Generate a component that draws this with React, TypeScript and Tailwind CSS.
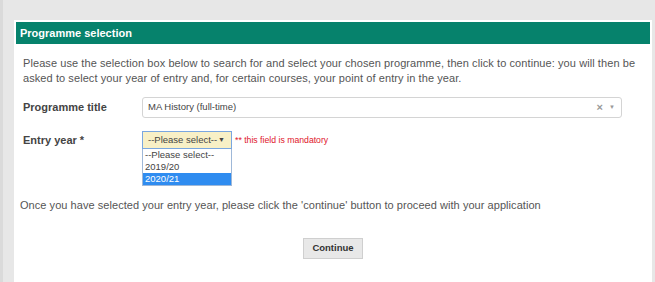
import React from 'react';

const font = { fontFamily: '"Liberation Sans", Arial, sans-serif' };

const EntryYearSelect: React.FC = () => {
  const options = ['--Please select--', '2019/20', '2020/21'];
  return (
    <div className="relative w-[90px]">
      <div className="h-[18px] border border-[#7aa7e0] bg-[#f8f0c6] flex items-center justify-between pl-[5px] pr-[6px] text-[9.5px] text-[#444] whitespace-nowrap">
        <span>--Please select--</span>
        <span className="text-[7px] text-[#444]">▼</span>
      </div>
      <ul className="absolute left-0 top-[18px] w-[90px] border border-[#9fb8d8] border-t-0 bg-white text-[9.5px] leading-[12px] text-[#444] whitespace-nowrap">
        {options.map((o, i) => (
          <li
            key={o}
            className={i === 2 ? 'bg-[#2f8cf0] text-white px-[2px]' : 'px-[2px]'}
          >
            {o}
          </li>
        ))}
      </ul>
    </div>
  );
};

export default function App() {
  return (
    <div
      className="h-[282px] w-full overflow-hidden bg-[#e7e7e7] border-l-[3px] border-[#dadada] pt-5 pl-[11px] pr-[3px]"
      style={font}
    >
      <div className="h-full bg-white p-[2px]">
        <div className="h-[22px] bg-[#06826c] text-white font-bold text-[11px] flex items-center pl-1">
          Programme selection
        </div>

        <div className="px-[7px] text-[#555]">
          <p className="mt-[12px] text-[11px] leading-[15px] tracking-[0.08px]">
            Please use the selection box below to search for and select your chosen programme, then click to continue: you will then be asked to select your year of entry and, for certain courses, your point of entry in the year.
          </p>

          <div className="mt-[11px] flex items-center">
            <label className="w-[119px] font-bold text-[11px] text-[#444]">Programme title</label>
            <div className="h-[21px] w-[480px] border border-[#d4d4d4] rounded-[3px] flex items-center justify-between pl-[5px] pr-[6px] text-[9.5px] text-[#444]">
              <span>MA History (full-time)</span>
              <span className="flex items-center gap-[6px] text-[#999]">
                <span className="text-[11px] font-bold leading-none">×</span>
                <span className="text-[6px]">▼</span>
              </span>
            </div>
          </div>

          <div className="mt-[13px] flex items-start">
            <label className="w-[119px] font-bold text-[11px] text-[#444] mt-[1px]">Entry year *</label>
            <EntryYearSelect />
            <span className="ml-[3px] mt-[3px] text-[8.7px] text-[#e0162b]">** this field is mandatory</span>
          </div>

          <p className="mt-[49px] -ml-[3px] text-[11px] leading-[15px] tracking-[0.05px]">
            Once you have selected your entry year, please click the 'continue' button to proceed with your application
          </p>

          <div className="mt-[25px] flex justify-center">
            <button className="h-[21px] w-[60px] bg-[#e8e8e8] border border-[#cfcfcf] text-[9.5px] font-bold text-[#333]">
              Continue
            </button>
          </div>
        </div>
      </div>
    </div>
  );
}
